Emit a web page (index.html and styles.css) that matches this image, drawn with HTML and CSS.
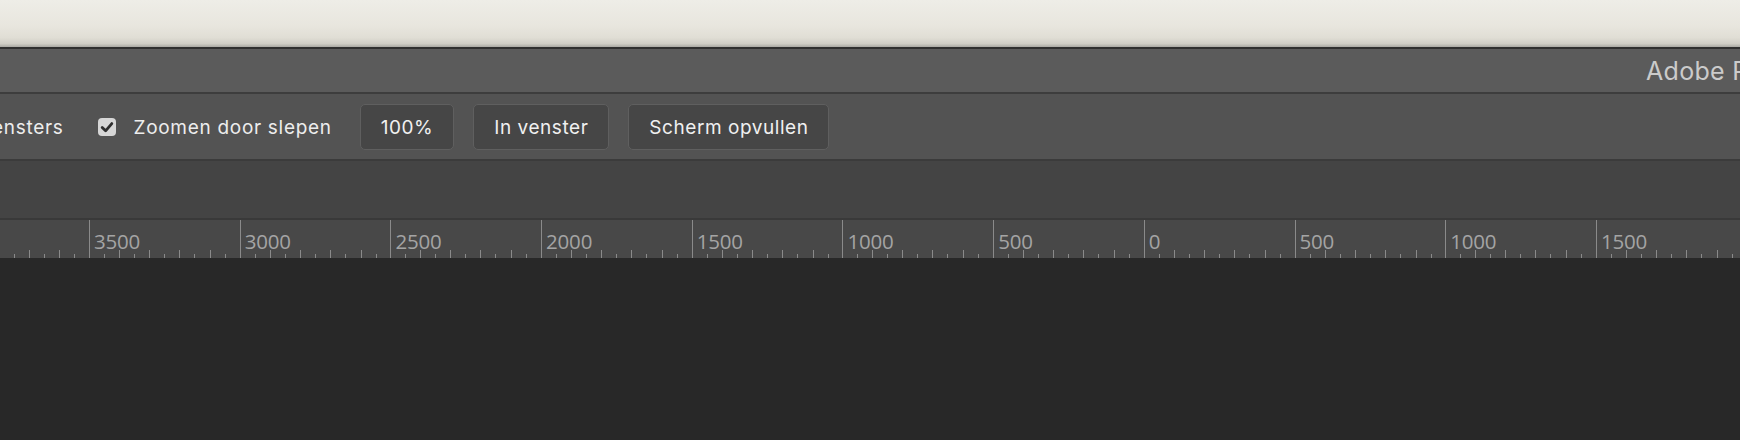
FILE: index.html
```html
<!DOCTYPE html>
<html lang="nl">
<head>
<meta charset="utf-8">
<title>Adobe Photoshop</title>
<link rel="stylesheet" href="styles.css">
</head>
<body>
<div class="screen">
  <div class="desk"></div>
  <div class="titlebar"><span class="title">Adobe Photoshop 2022</span></div>
  <div class="options">
    <span class="label cut">vensters</span>
    <span class="check">
      <svg viewBox="0 0 18 18" width="18" height="18"><path d="M4.2 9.4 L7.6 12.8 L13.8 5.6" fill="none" stroke="#2e2e2e" stroke-width="2.8" stroke-linecap="round" stroke-linejoin="round"/></svg>
    </span>
    <span class="label">Zoomen door slepen</span>
    <button class="btn first">100%</button>
    <button class="btn">In venster</button>
    <button class="btn">Scherm opvullen</button>
  </div>
  <div class="panelbar"></div>
  <div class="ruler">
    <div class="seg"><span>3500</span></div>
    <div class="seg"><span>3000</span></div>
    <div class="seg"><span>2500</span></div>
    <div class="seg"><span>2000</span></div>
    <div class="seg"><span>1500</span></div>
    <div class="seg"><span>1000</span></div>
    <div class="seg"><span>500</span></div>
    <div class="seg"><span>0</span></div>
    <div class="seg"><span>500</span></div>
    <div class="seg"><span>1000</span></div>
    <div class="seg"><span>1500</span></div>
  </div>
  <div class="canvas"></div>
</div>
</body>
</html>
```

FILE: styles.css
```css
* { box-sizing: border-box; }
html, body { margin: 0; padding: 0; background: #282828; }
.screen {
  width: 1740px;
  height: 440px;
  overflow: hidden;
  display: flex;
  flex-direction: column;
  font-family: "Inter", "Noto Sans", sans-serif;
}
.desk {
  flex: 0 0 47px;
  background: linear-gradient(to bottom, #eeede7 0%, #e8e6de 55%, #e0ded5 80%, #cfcdc5 93%, #a9a8a2 100%);
}
.titlebar {
  flex: 0 0 47px;
  background: #5b5b5b;
  border-top: 2px solid #2f2f2f;
  border-bottom: 2px solid #3d3d3d;
  display: flex;
  align-items: center;
  padding-left: 1646px;
  padding-top: 1px;
  white-space: nowrap;
  overflow: hidden;
}
.title {
  font-size: 25px;
  color: #cbcbcb;
  letter-spacing: 0.3px;
}
.options {
  flex: 0 0 67px;
  background: #535353;
  border-bottom: 2px solid #3b3b3b;
  display: flex;
  align-items: center;
  padding-top: 1px;
  white-space: nowrap;
}
.label {
  font-size: 19px;
  color: #ededed;
  letter-spacing: 0.7px;
}
.cut { margin-left: -19px; }
.check {
  width: 18px;
  height: 18px;
  margin-left: 34px;
  margin-right: 18px;
  border-radius: 4px;
  background: #d6d6d6;
  display: flex;
}
.btn {
  height: 46px;
  margin-left: 19px;
  padding: 0 20px;
  background: #464646;
  border: 1.5px solid #5f5f5f;
  border-radius: 5px;
  font-family: inherit;
  font-size: 19px;
  letter-spacing: 0.55px;
  color: #f0f0f0;
}
.btn.first { margin-left: 28px; }
.panelbar {
  flex: 0 0 59px;
  background: #444444;
  border-bottom: 2px solid #393939;
}
.ruler {
  flex: 0 0 38px;
  background-color: #484848;
  background-image:
    repeating-linear-gradient(to right, #8a8a8a 0 1px, transparent 1px 30.14px),
    repeating-linear-gradient(to right, #8a8a8a 0 1px, transparent 1px 30.14px);
  background-size: 100% 8px, 100% 4px;
  background-repeat: no-repeat;
  background-position: 29px 100%, 14px 100%;
  display: flex;
  padding-left: 89px;
}
.seg {
  flex: 0 0 150.7px;
  border-left: 1px solid #8a8a8a;
  background: #484848;
  background-image:
    repeating-linear-gradient(to right, transparent 0 29.14px, #8a8a8a 29.14px 30.14px),
    repeating-linear-gradient(to right, transparent 0 14.07px, #8a8a8a 14.07px 15.07px);
  background-size: 100% 8px, 100% 4px;
  background-repeat: no-repeat;
  background-position: 0 100%, 0 100%;
  padding-left: 4px;
  padding-top: 11px;
}
.seg span {
  font-family: "Open Sans", "Liberation Sans", sans-serif;
  font-size: 20.5px;
  line-height: 20px;
  color: #a4a4a4;
  letter-spacing: -0.2px;
  display: block;
}
.canvas {
  flex: 1 1 auto;
  background: #282828;
}
```
